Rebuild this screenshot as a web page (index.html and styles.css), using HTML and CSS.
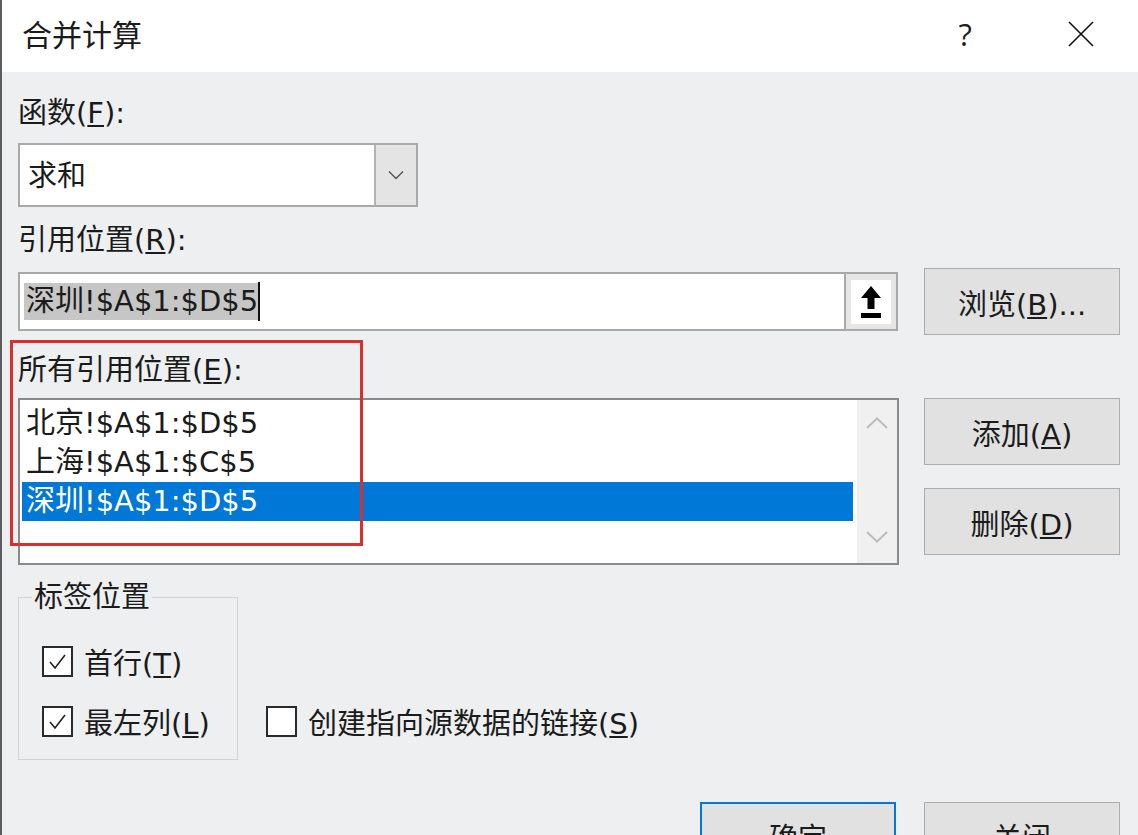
FILE: index.html
```html
<!DOCTYPE html>
<html lang="zh-CN">
<head>
    <meta charset="UTF-8">
    <title>合并计算</title>
    <link rel="stylesheet" href="styles.css">
</head>
<body>
    <div class="dialog">
        <div class="titlebar">
            <div class="title">合并计算</div>
            <div class="title-buttons">
                <span class="help">?</span>
                <svg class="close" width="26" height="26" viewBox="0 0 26 26">
                    <path d="M1 1 L25 25 M25 1 L1 25" stroke="#111" stroke-width="1.6" fill="none"/>
                </svg>
            </div>
        </div>

        <div class="content">
            <div class="field-label">函数(<u>F</u>):</div>
            <div class="combo">
                <span class="combo-value">求和</span>
                <span class="combo-arrow">
                    <svg width="16" height="10" viewBox="0 0 16 10">
                        <path d="M1 1.5 L8 8.5 L15 1.5" stroke="#555" stroke-width="1.5" fill="none"/>
                    </svg>
                </span>
            </div>

            <div class="field-label">引用位置(<u>R</u>):</div>
            <div class="row ref-row">
                <div class="ref-input">
                    <span class="ref-text"><span class="selection">深圳!$A$1:$D$5</span><span class="caret"></span></span>
                    <span class="collapse-btn">
                        <span class="collapse-inner">
                            <svg width="24" height="36" viewBox="0 0 24 36">
                                <path d="M12 2 L22 14 L15.5 14 L15.5 25 L8.5 25 L8.5 14 L2 14 Z" fill="#000"/>
                                <rect x="2" y="29" width="20" height="5" fill="#000"/>
                            </svg>
                        </span>
                    </span>
                </div>
                <button class="btn">浏览(<u>B</u>)...</button>
            </div>

            <div class="field-label all-refs-label">所有引用位置(<u>E</u>):</div>
            <div class="row list-row">
                <div class="listbox">
                    <div class="list-items">
                        <div class="list-item">北京!$A$1:$D$5</div>
                        <div class="list-item">上海!$A$1:$C$5</div>
                        <div class="list-item selected">深圳!$A$1:$D$5</div>
                    </div>
                    <div class="scrollbar">
                        <svg width="22" height="12" viewBox="0 0 22 12">
                            <path d="M1 11 L11 1.5 L21 11" stroke="#bdbdbd" stroke-width="2" fill="none"/>
                        </svg>
                        <svg width="22" height="12" viewBox="0 0 22 12">
                            <path d="M1 1 L11 10.5 L21 1" stroke="#bdbdbd" stroke-width="2" fill="none"/>
                        </svg>
                    </div>
                </div>
                <div class="btn-stack">
                    <button class="btn">添加(<u>A</u>)</button>
                    <button class="btn">删除(<u>D</u>)</button>
                </div>
            </div>

            <div class="row options-row">
                <fieldset class="group">
                    <legend>标签位置</legend>
                    <label class="check">
                        <span class="box checked"><svg width="27" height="27" viewBox="0 0 27 27"><path d="M6 14 L11 20 L21 7" stroke="#222" stroke-width="1.6" fill="none"/></svg></span>
                        <span>首行(<u>T</u>)</span>
                    </label>
                    <label class="check">
                        <span class="box checked"><svg width="27" height="27" viewBox="0 0 27 27"><path d="M6 14 L11 20 L21 7" stroke="#222" stroke-width="1.6" fill="none"/></svg></span>
                        <span>最左列(<u>L</u>)</span>
                    </label>
                </fieldset>
                <label class="check link-check">
                    <span class="box"></span>
                    <span>创建指向源数据的链接(<u>S</u>)</span>
                </label>
            </div>

            <div class="row footer">
                <button class="btn default">确定</button>
                <button class="btn">关闭</button>
            </div>
        </div>

        <div class="annotation"></div>
    </div>
</body>
</html>
```

FILE: styles.css
```css
html, body {
    margin: 0;
    height: 100%;
    overflow: hidden;
}
body {
    font-family: "DejaVu Sans", "Noto Sans CJK SC", sans-serif;
    font-size: 29px;
    color: #1b1b1b;
    background: #eeeff1;
}
.dialog {
    position: relative;
    height: 100%;
    border-left: 2px solid #5c5c5c;
    box-sizing: border-box;
}
.titlebar {
    height: 72px;
    background: #fff;
    display: flex;
    align-items: center;
    justify-content: space-between;
    padding: 0 44px 0 20px;
}
.title {
    font-size: 30px;
    margin-top: -6px;
}
.title-buttons {
    display: flex;
    align-items: center;
    gap: 96px;
}
.help {
    font-family: "Open Sans", sans-serif;
    font-size: 31px;
    margin-top: -5px;
}
.close {
    margin-top: -4px;
}
.content {
    padding: 21px 18px 0 16px;
}
.field-label {
    height: 40px;
    line-height: 40px;
}
.all-refs-label {
    margin-top: 15px;
}
.row {
    display: flex;
}

/* combo box */
.combo {
    margin-top: 10px;
    width: 400px;
    height: 64px;
    box-sizing: border-box;
    border: 2px solid #a9a9a9;
    background: #fff;
    display: flex;
    margin-bottom: 13px;
}
.combo-value {
    flex: 1;
    line-height: 62px;
    padding-left: 8px;
}
.combo-arrow {
    width: 40px;
    background: #e4e4e4;
    border-left: 2px solid #b3b3b3;
    display: flex;
    align-items: center;
    justify-content: center;
}

/* reference input */
.ref-row {
    margin-top: 8px;
    align-items: center;
    gap: 26px;
}
.ref-input {
    width: 880px;
    height: 59px;
    box-sizing: border-box;
    border: 2px solid #a9a9a9;
    background: #fff;
    display: flex;
    align-items: center;
}
.ref-text {
    flex: 1;
    display: flex;
    align-items: center;
    padding-left: 4px;
}
.selection {
    background: #c6c6c6;
    line-height: 37px;
    height: 37px;
    padding-left: 2px;
}
.caret {
    width: 2px;
    height: 39px;
    background: #111;
}
.collapse-btn {
    width: 50px;
    height: 55px;
    border-left: 2px solid #a9a9a9;
    background: #e6e6e6;
    display: flex;
    align-items: center;
    justify-content: center;
}
.collapse-inner {
    width: 40px;
    height: 44px;
    background: #fff;
    display: flex;
    align-items: center;
    justify-content: center;
}

/* buttons */
.btn {
    width: 196px;
    height: 67px;
    font: inherit;
    color: inherit;
    background: #e1e1e1;
    border: 1px solid #adadad;
    padding: 0;
    flex-shrink: 0;
}
.btn.default {
    border: 2px solid #0078d7;
}

/* all references list */
.list-row {
    margin-top: 8px;
    gap: 25px;
}
.listbox {
    width: 881px;
    height: 167px;
    box-sizing: border-box;
    border: 2px solid #8a8a8a;
    background: #fff;
    display: flex;
    padding: 2px 0 2px 2px;
}
.list-items {
    flex: 1;
    margin-right: 4px;
}
.list-item {
    height: 39px;
    line-height: 39px;
    padding-left: 4px;
}
.list-item:first-child {
    margin-top: 2px;
}
.list-item.selected {
    background: #0078d7;
    color: #fff;
}
.scrollbar {
    width: 40px;
    margin: -2px 0;
    background: #f0f0f0;
    display: flex;
    flex-direction: column;
    align-items: center;
    justify-content: space-between;
    padding: 17px 0 20px;
}
.btn-stack {
    display: flex;
    flex-direction: column;
    gap: 23px;
}

/* label position group */
.options-row {
    margin-top: 12px;
    gap: 28px;
}
.group {
    width: 220px;
    box-sizing: border-box;
    margin: 0;
    border: 1px solid #d3d3d3;
    padding: 4px 0 18px 13px;
}
.group legend {
    padding: 0 2px;
    line-height: 40px;
}
.check {
    display: flex;
    align-items: center;
    gap: 11px;
    height: 40px;
}
.group .check {
    margin-left: 10px;
    margin-top: 20px;
}
.box {
    width: 31px;
    height: 31px;
    box-sizing: border-box;
    border: 2px solid #2a2a2a;
    background: #fff;
    display: flex;
    align-items: center;
    justify-content: center;
}
.link-check {
    align-self: flex-end;
    margin-bottom: 19px;
}

.footer {
    margin-top: 42px;
    justify-content: flex-end;
    gap: 28px;
}

/* red annotation frame drawn over the dialog */
.annotation {
    position: absolute;
    left: 8px;
    top: 340px;
    width: 353px;
    height: 206px;
    box-sizing: border-box;
    border: 3px solid #d9302f;
}
```
